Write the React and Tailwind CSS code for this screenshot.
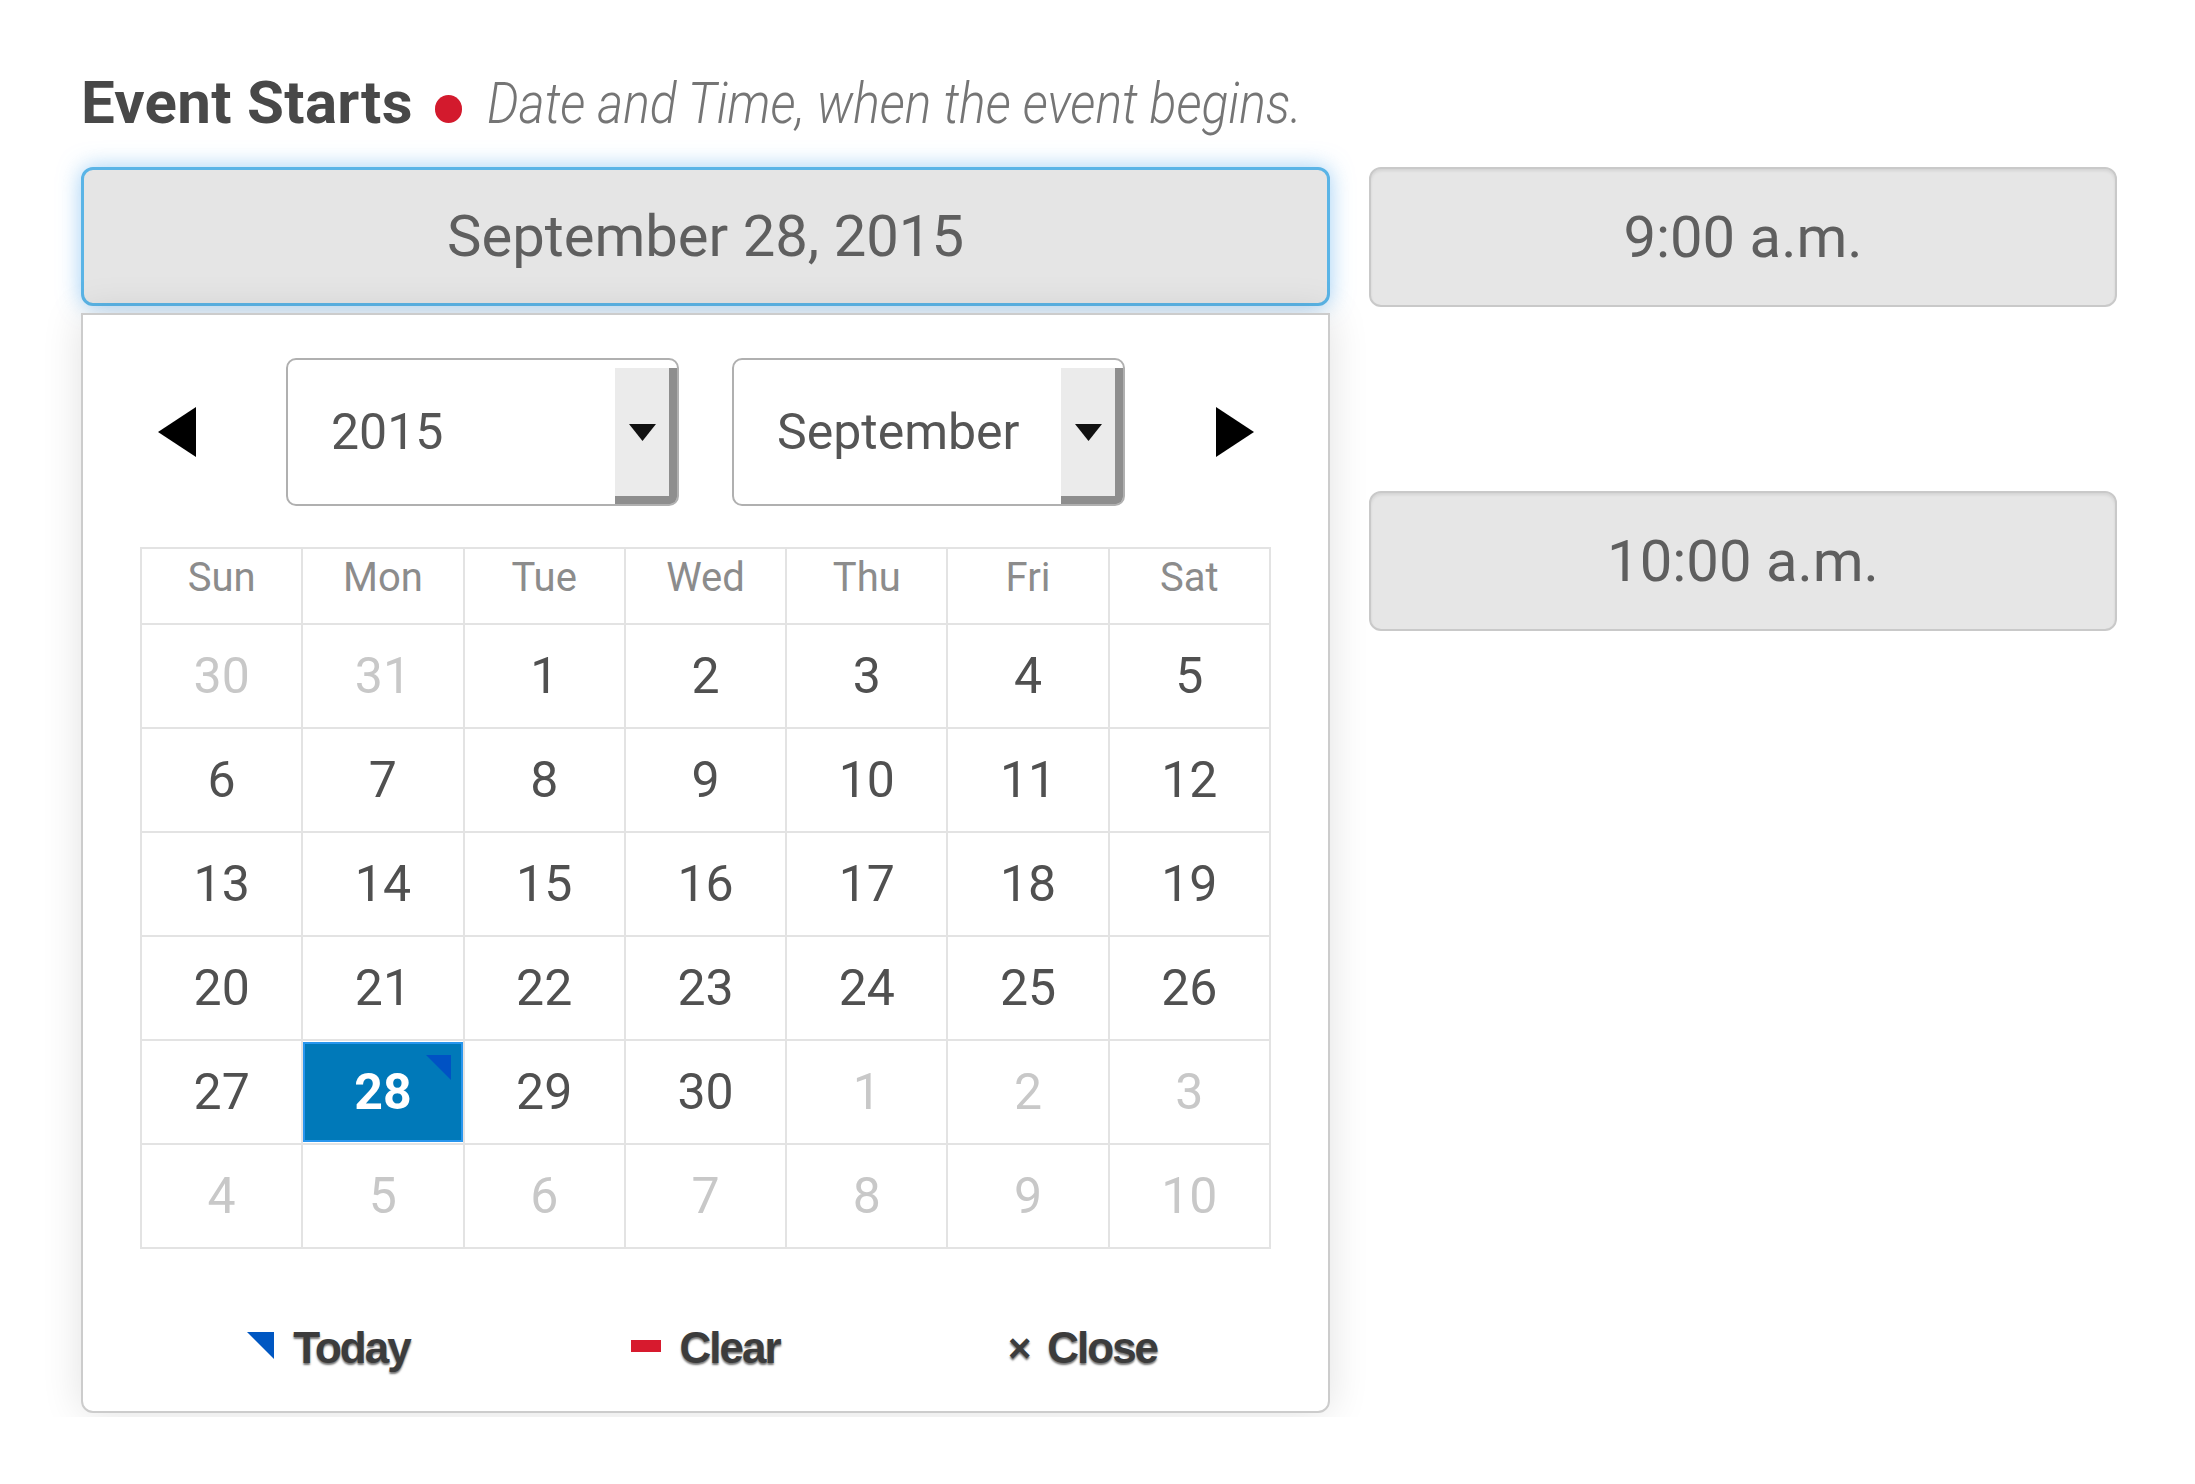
import React from "react";

const HEAD = ["Sun", "Mon", "Tue", "Wed", "Thu", "Fri", "Sat"];
const ROWS = [
  [[30, 0], [31, 0], [1, 1], [2, 1], [3, 1], [4, 1], [5, 1]],
  [[6, 1], [7, 1], [8, 1], [9, 1], [10, 1], [11, 1], [12, 1]],
  [[13, 1], [14, 1], [15, 1], [16, 1], [17, 1], [18, 1], [19, 1]],
  [[20, 1], [21, 1], [22, 1], [23, 1], [24, 1], [25, 1], [26, 1]],
  [[27, 1], [28, 2], [29, 1], [30, 1], [1, 0], [2, 0], [3, 0]],
  [[4, 0], [5, 0], [6, 0], [7, 0], [8, 0], [9, 0], [10, 0]],
];

function Select({ value }) {
  return (
    <div className="w-[393px] h-[148px] rounded-[10px] border-2 border-[#b0b0b0] bg-white flex overflow-hidden">
      <div className="flex-1 flex items-center pl-[43px] text-[50px] text-[#555]">{value}</div>
      <div className="w-[62px] mt-[8px] bg-[#ebebeb] border-r-[8px] border-b-[8px] border-[#8e8e8e] rounded-br-[7px] flex items-center justify-center">
        <svg width="27" height="17" viewBox="0 0 27 17">
          <polygon points="0,0 27,0 13.5,17" fill="#111" />
        </svg>
      </div>
    </div>
  );
}

function TimeBox({ children, className }) {
  return (
    <div
      className={
        "h-[140px] rounded-[12px] border-2 border-[#c9c9c9] bg-[#e6e6e6] shadow-[inset_0_2px_3px_rgba(0,0,0,0.08)] flex items-center justify-center text-[58px] text-[#5f5f5f] " +
        (className || "")
      }
    >
      {children}
    </div>
  );
}

export default function App() {
  return (
    <div className="w-[2195px] h-[1417px] overflow-hidden bg-white font-['Roboto','Noto_Sans',sans-serif]">
      <div className="flex pl-[81px] pt-[75px]">
        {/* left column */}
        <div className="w-[1249px] flex flex-col">
          <div className="h-[56px] leading-[56px] whitespace-nowrap">
            <span className="text-[60px] font-bold tracking-[0.3px] text-[#484848]">Event Starts</span>
            <span className="inline-block ml-[22px] w-[27px] h-[28px] rounded-full bg-[#d31a2d]"></span>
            <span className="inline-block ml-[25px] origin-left scale-x-[0.86] text-[58px] font-light italic text-[#757575]">
              Date and Time, when the event begins.
            </span>
          </div>

          <div className="mt-[36px] h-[139px] rounded-[12px] border-[3px] border-[#5ab4e6] bg-[#e5e5e5] shadow-[0_0_22px_rgba(82,168,236,0.55)] flex items-center justify-center text-[58px] text-[#5f5f5f]">
            September 28, 2015
          </div>

          {/* popup */}
          <div className="mt-[7px] h-[1100px] border-2 border-[#cccccc] rounded-b-[12px] bg-white shadow-[0_0_40px_rgba(0,0,0,0.12)] flex flex-col pl-[57px]">
            <div className="pt-[43px] flex items-center">
              <div className="ml-[18px] w-[38px] flex">
                <svg width="38" height="50" viewBox="0 0 38 50">
                  <polygon points="38,0 38,50 0,25" fill="#000" />
                </svg>
              </div>
              <div className="ml-[90px]">
                <Select value="2015" />
              </div>
              <div className="ml-[53px]">
                <Select value="September" />
              </div>
              <div className="ml-[91px] w-[38px] flex">
                <svg width="38" height="50" viewBox="0 0 38 50">
                  <polygon points="0,0 38,25 0,50" fill="#000" />
                </svg>
              </div>
            </div>

            <table className="mt-[41px] w-[1131px] table-fixed border-collapse">
              <thead>
                <tr className="h-[76px]">
                  {HEAD.map((h) => (
                    <th
                      key={h}
                      className="border-2 border-[#e3e3e3] align-top pt-[9px] leading-none text-[40px] font-normal text-[#8c8c8c]"
                    >
                      {h}
                    </th>
                  ))}
                </tr>
              </thead>
              <tbody>
                {ROWS.map((row, ri) => (
                  <tr key={ri} className="h-[104px]">
                    {row.map(([d, t], ci) =>
                      t === 2 ? (
                        <td key={ci} className="border-2 border-[#e3e3e3] p-0">
                          <div className="relative h-[100px] bg-[#0079b9] border-2 border-[#2896ee] flex items-center justify-center text-[50px] font-bold text-white">
                            {d}
                            <svg className="absolute top-[11px] right-[10px]" width="25" height="25" viewBox="0 0 25 25">
                              <polygon points="0,0 25,0 25,25" fill="#0052c4" />
                            </svg>
                          </div>
                        </td>
                      ) : (
                        <td
                          key={ci}
                          className={
                            "border-2 border-[#e3e3e3] text-center align-middle text-[50px] " +
                            (t === 1 ? "text-[#505050]" : "text-[#c8c8c8]")
                          }
                        >
                          {d}
                        </td>
                      )
                    )}
                  </tr>
                ))}
              </tbody>
            </table>

            <div className="mt-[66px] w-[1131px] h-[62px] grid grid-cols-3 items-center font-['Liberation_Sans',Arial,sans-serif] font-bold text-[44px] tracking-[-2px] text-[#3c3c3c] [text-shadow:0_2px_2px_rgba(0,0,0,0.55)]">
              <div className="flex items-center justify-center">
                <svg className="mt-[-6px]" width="27" height="27" viewBox="0 0 27 27">
                  <polygon points="0,0 27,0 27,27" fill="#0057c2" />
                </svg>
                <span className="ml-[19px]">Today</span>
              </div>
              <div className="flex items-center justify-center">
                <span className="inline-block w-[30px] h-[12px] bg-[#d71a2e] mt-[-4px]"></span>
                <span className="ml-[18px]">Clear</span>
              </div>
              <div className="flex items-center justify-center">
                <span className="text-[40px] tracking-normal">×</span>
                <span className="ml-[16px]">Close</span>
              </div>
            </div>
          </div>
        </div>

        {/* right column */}
        <div className="ml-[39px] w-[748px] flex flex-col pt-[92px]">
          <TimeBox>9:00 a.m.</TimeBox>
          <TimeBox className="mt-[184px]">10:00 a.m.</TimeBox>
        </div>
      </div>
    </div>
  );
}
